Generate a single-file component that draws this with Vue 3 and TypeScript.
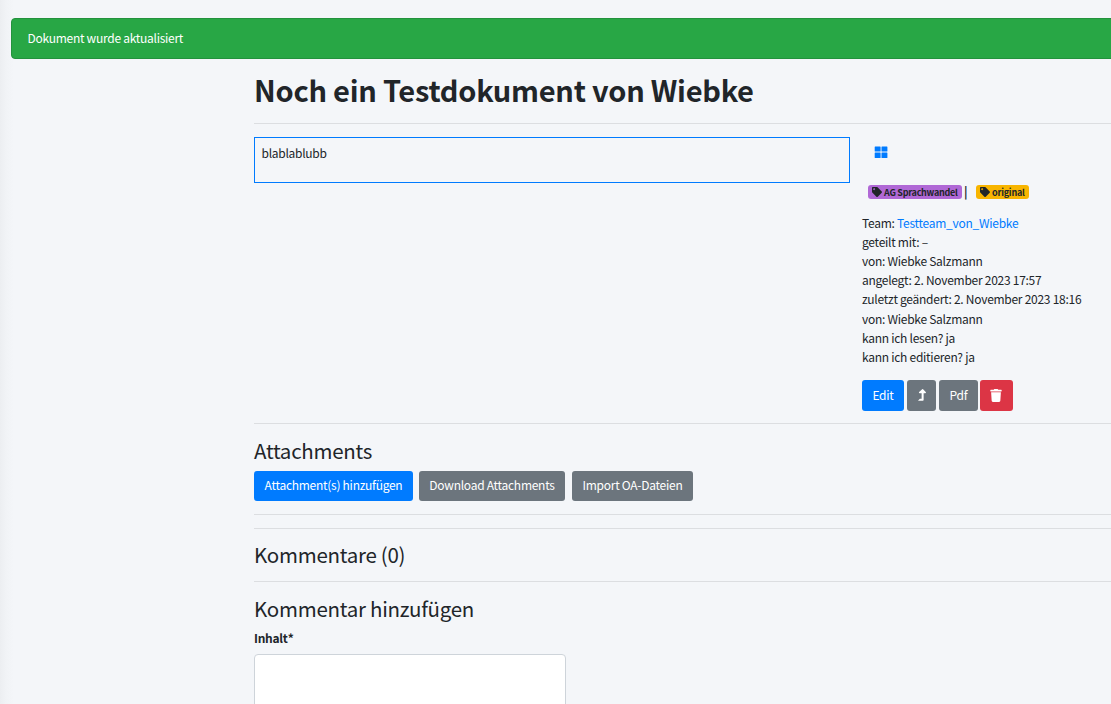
<script setup lang="ts">
interface Tag { label: string; tone: string }
const tags: Tag[] = [
  { label: 'AG Sprachwandel', tone: 'purple' },
  { label: 'original', tone: 'yellow' },
]
const meta: string[] = [
  'geteilt mit: –',
  'von: Wiebke Salzmann',
  'angelegt: 2. November 2023 17:57',
  'zuletzt geändert: 2. November 2023 18:16',
  'von: Wiebke Salzmann',
  'kann ich lesen? ja',
  'kann ich editieren? ja',
]
</script>

<template>
  <div class="page">
    <div class="alert" role="alert">Dokument wurde aktualisiert</div>
    <main class="content">
      <h1><span>Noch ein Testdokument von Wiebke</span></h1>
      <div class="document">
        <div class="body-text"><span>blablablubb</span></div>
        <aside>
          <a class="grid-link" href="#" aria-label="Kacheln">
            <svg width="14" height="12" viewBox="0 0 14 12"><path fill="currentColor" d="M1.200.4h4.900q.5 0 .5.5v4.200q0 .5-.5.5H1.200q-.5 0-.5-.5V.9q0-.5.5-.5ZM8 .4h4.900q.5 0 .5.5v4.200q0 .5-.5.5H8q-.5 0-.5-.5V.9Q7.500.4 8 .4ZM1.200 6.600h4.900q.5 0 .5.5v4.300q0 .5-.5.5H1.200q-.5 0-.5-.5V7.100q0-.5.5-.5ZM8 6.600h4.900q.5 0 .5.5v4.300q0 .5-.5.5H8q-.5 0-.5-.5V7.100q0-.5.5-.5Z" /></svg>
          </a>
          <div class="tags">
            <template v-for="(tag, i) in tags" :key="tag.label">
              <span v-if="i > 0" class="bar">|</span>
              <span class="badge" :class="tag.tone">
                <svg width="10" height="10" viewBox="0 0 512 512"><path fill="currentColor" d="M0 252.118V48C0 21.490 21.490 0 48 0h204.118a48 48 0 0 1 33.941 14.059l211.882 211.882c18.745 18.745 18.745 49.137 0 67.882L293.823 497.941c-18.745 18.745-49.137 18.745-67.882 0L14.059 286.059A48 48 0 0 1 0 252.118zM112 64c-26.510 0-48 21.490-48 48s21.490 48 48 48 48-21.490 48-48-21.490-48-48-48z" /></svg>
                <span class="badge-label">{{ tag.label }}</span>
              </span>
            </template>
          </div>
          <div class="meta">
            <div>Team: <a href="#">Testteam_von_Wiebke</a></div>
            <div v-for="(line, i) in meta" :key="i"><span>{{ line }}</span></div>
          </div>
          <div class="actions">
            <button class="btn primary edit">Edit</button>
            <button class="btn secondary up" aria-label="Ebene hoch">
              <svg width="8" height="13" viewBox="0 0 256 416"><path fill="currentColor" d="M7 367 52 320Q57 315 64 315H116V136H55C32 136 20 109 36 92L134 8Q148-4 162 8L248 92C264 109 252 136 229 136H180V355C180 368 169 379 156 379H12C2 379-1 373 7 367Z" /></svg>
            </button>
            <button class="btn secondary pdf">Pdf</button>
            <button class="btn danger trash" aria-label="Löschen">
              <svg width="12" height="13" viewBox="0 0 448 512"><path fill="currentColor" d="M432 32H312l-9.400-18.700A24 24 0 0 0 281.100 0H166.800a23.720 23.720 0 0 0-21.400 13.300L136 32H16A16 16 0 0 0 0 48v32a16 16 0 0 0 16 16h416a16 16 0 0 0 16-16V48a16 16 0 0 0-16-16zM53.200 467a48 48 0 0 0 47.900 45h245.800a48 48 0 0 0 47.900-45L416 128H32z" /></svg>
            </button>
          </div>
        </aside>
      </div>
      <section class="attachments">
        <h3>Attachments</h3>
        <div class="buttons">
          <button class="btn primary add">Attachment(s) hinzufügen</button>
          <button class="btn secondary download">Download Attachments</button>
          <button class="btn secondary import">Import OA-Dateien</button>
        </div>
      </section>
      <hr>
      <section class="comments"><h3>Kommentare (0)</h3></section>
      <section class="new-comment">
        <h3>Kommentar hinzufügen</h3>
        <label for="inhalt">Inhalt*</label>
        <textarea id="inhalt"></textarea>
      </section>
    </main>
  </div>
</template>

<style>
body { margin: 0; overflow: hidden; background: #f4f6f9; }
</style>

<style scoped>
* { box-sizing: border-box; }
.page {
  height: 704px;
  overflow: hidden;
  padding: 18px 0 0 11px;
  color: #212529;
  background: linear-gradient(90deg, #eceef1 0, #f1f3f6 6px, #f4f6f9 14px);
  font: 12px/19.2px "Noto Sans CJK SC", "Noto Sans", sans-serif;
  font-feature-settings: "liga" 1;
  letter-spacing: -0.27px;
  white-space: nowrap;
}
.alert {
  height: 41px;
  width: 1120px;
  padding: 9px 15.5px;
  border: 1px solid #23923d;
  border-radius: 4px;
  background: #28a745;
  color: #fff;
}
.content { width: 880px; margin-left: 243px; }
h1, h3 { margin: 0; }
h1 {
  height: 65px;
  padding-top: 11px;
  border-bottom: 1px solid #dcdee1;
  font-size: 29px;
  line-height: 38px;
  font-weight: 700;
  letter-spacing: -0.25px;
}
.document {
  display: flex;
  gap: 12px;
  height: 300px;
  padding-top: 13px;
  border-bottom: 1px solid #dcdee1;
}
.body-text { width: 596px; height: 46px; padding: 5px 6.5px; border: 1px solid #007bff; }
aside { flex: 1; }
a { color: #007bff; text-decoration: none; }
.grid-link { display: block; width: 14px; height: 12px; margin: 9px 0 0 12px; }
svg { display: block; flex: none; }
.tags { display: flex; align-items: center; height: 19px; margin: 24px 0 0 6px; }
.badge {
  display: flex;
  align-items: center;
  gap: 2px;
  height: 14px;
  padding: 0 4px;
  border-radius: 3px;
  font-size: 9px;
  line-height: 14px;
  font-weight: 700;
}
.badge-label { padding-top: 2px; }
.purple { width: 94px; background: #b068d6; }
.yellow { width: 53px; background: #f8b500; letter-spacing: -0.2px; }
.bar { width: 14px; height: 22px; padding-left: 2px; font-weight: 700; }
.meta { margin-top: 11.5px; line-height: 19.2px; }
.actions { display: flex; margin-top: 12.9px; padding-top: 1px; }
.btn {
  display: flex;
  align-items: center;
  justify-content: center;
  height: 31px;
  padding: 0 0 2px;
  border: 0;
  border-radius: 3px;
  color: #fff;
  font: inherit;
  font-feature-settings: inherit;
  letter-spacing: inherit;
}
.primary { background: #007bff; }
.secondary { background: #6c757d; }
.danger { background: #dc3545; }
.edit { width: 42px; margin-right: 3px; }
.up { width: 29px; margin-right: 3px; padding-bottom: 0; }
.pdf { width: 39px; margin-right: 2px; }
.trash { width: 33px; padding: 0 1px 0 0; }
h3 { height: 27px; font-size: 20.5px; line-height: 27px; font-weight: 400; }
.attachments { height: 91px; padding-top: 13px; border-bottom: 1px solid #dcdee1; }
.buttons { display: flex; margin-top: 7px; }
.buttons .btn { height: 30px; }
.add { width: 159px; margin-right: 6px; }
.download { width: 146px; margin-right: 7px; }
.import { width: 121px; }
hr { height: 1px; margin: 13px 0 0; border: 0; background: #dcdee1; }
.comments { height: 53px; padding-top: 12px; border-bottom: 1px solid #dcdee1; }
.new-comment { padding-top: 13px; }
label { display: block; height: 20px; margin-top: 6px; font-weight: 700; }
textarea {
  display: block;
  width: 312px;
  height: 120px;
  margin-top: 6px;
  border: 1px solid #ced4da;
  border-radius: 4px;
  background: #fff;
  resize: none;
}
</style>
